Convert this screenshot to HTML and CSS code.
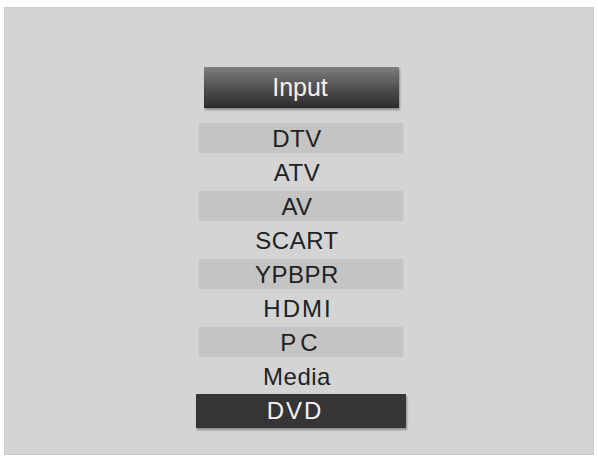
FILE: index.html
```html
<!DOCTYPE html>
<html>
<head>
<meta charset="utf-8">
<link rel="stylesheet" href="styles.css">
</head>
<body>
<div class="panel">
  <div class="menu">
    <div class="title">Input</div>
    <ul class="list">
      <li class="item bar">DTV</li>
      <li class="item">ATV</li>
      <li class="item bar">AV</li>
      <li class="item">SCART</li>
      <li class="item bar">YPBPR</li>
      <li class="item wide">HDMI</li>
      <li class="item bar wider">PC</li>
      <li class="item">Media</li>
      <li class="item selected wide">DVD</li>
    </ul>
  </div>
</div>
</body>
</html>
```
FILE: styles.css
```css
html, body {
  margin: 0;
  padding: 0;
  background: #ffffff;
}
body {
  width: 598px;
  height: 462px;
  overflow: hidden;
  font-family: "Liberation Sans", Arial, sans-serif;
}
.panel {
  margin: 7px 4px 0 4px;
  height: 448px;
  background: #d4d4d4;
  box-shadow: inset 0 0 0 1px #cdcdcd;
  display: flex;
  justify-content: center;
  padding-top: 60px;
  box-sizing: border-box;
}
.menu {
  width: 204px;
  margin-left: 4px;
  display: flex;
  flex-direction: column;
  align-items: center;
}
.title {
  width: 195px;
  height: 41px;
  box-sizing: border-box;
  background: linear-gradient(#7e7e7e, #4e4c4c 55%, #2c2a2a);
  box-shadow: 1px 2px 2px rgba(0,0,0,0.35);
  color: #f2f2f2;
  font-size: 25px;
  line-height: 40px;
  text-align: center;
  padding-right: 2px;
}
.list {
  list-style: none;
  margin: 15px 0 0 0;
  padding: 0;
  width: 204px;
  display: flex;
  flex-direction: column;
  gap: 4px;
}
.item {
  height: 30px;
  line-height: 32px;
  font-size: 24px;
  color: #222222;
  text-align: center;
  padding-right: 8px;
  letter-spacing: 0.5px;
  box-sizing: border-box;
}
.wide {
  letter-spacing: 2px;
  padding-right: 6px;
}
.wider {
  letter-spacing: 4px;
  padding-right: 0;
}
.bar {
  background: #c4c4c4;
  box-shadow: 0 0 1px #bdbdbd;
}
.selected {
  background: #363434;
  color: #f4f4f4;
  height: 34px;
  margin: -1px -3px 0 -3px;
  line-height: 34px;
  box-shadow: 1px 2px 2px rgba(0,0,0,0.35);
  padding-right: 12px;
}
```
